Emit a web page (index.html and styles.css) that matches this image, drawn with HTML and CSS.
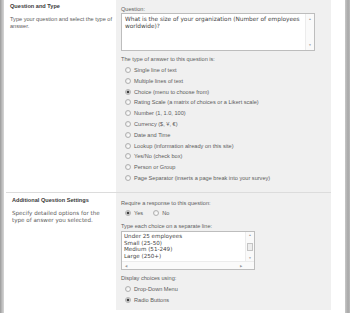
FILE: index.html
```html
<!DOCTYPE html>
<html>
<head>
    <title>Question and Type</title>
    <link rel="stylesheet" href="styles.css">
</head>
<body>
    <div class="frame">
        <div class="edge-left"></div>
        <div class="form">
            <div class="section first">
                <div class="desc">
                    <div class="title">Question and Type</div>
                    <div class="text">Type your question and select the type of answer.</div>
                </div>
                <div class="controls">
                    <div class="label">Question:</div>
                    <div class="textbox">
                        <div class="textbox-text">What is the size of your organization (Number of employees worldwide)?</div>
                        <div class="vscroll">
                            <span class="arrow">&#9650;</span>
                            <span class="arrow">&#9660;</span>
                        </div>
                    </div>
                    <div class="label gap">The type of answer to this question is:</div>
                    <div class="options">
                        <div class="option"><span class="radio"></span>Single line of text</div>
                        <div class="option"><span class="radio"></span>Multiple lines of text</div>
                        <div class="option"><span class="radio on"></span>Choice (menu to choose from)</div>
                        <div class="option"><span class="radio"></span>Rating Scale (a matrix of choices or a Likert scale)</div>
                        <div class="option"><span class="radio"></span>Number (1, 1.0, 100)</div>
                        <div class="option"><span class="radio"></span>Currency ($, &yen;, &euro;)</div>
                        <div class="option"><span class="radio"></span>Date and Time</div>
                        <div class="option"><span class="radio"></span>Lookup (information already on this site)</div>
                        <div class="option"><span class="radio"></span>Yes/No (check box)</div>
                        <div class="option"><span class="radio"></span>Person or Group</div>
                        <div class="option"><span class="radio"></span>Page Separator (inserts a page break into your survey)</div>
                    </div>
                </div>
            </div>
            <div class="section second">
                <div class="desc">
                    <div class="title">Additional Question Settings</div>
                    <div class="text">Specify detailed options for the type of answer you selected.</div>
                </div>
                <div class="controls">
                    <div class="label">Require a response to this question:</div>
                    <div class="inline-options">
                        <div class="option"><span class="radio on"></span>Yes</div>
                        <div class="option"><span class="radio"></span>No</div>
                    </div>
                    <div class="label gap">Type each choice on a separate line:</div>
                    <div class="listbox">
                        <div class="listbox-main">
                            <div class="listbox-text">
                                <div>Under 25 employees</div>
                                <div>Small (25-50)</div>
                                <div>Medium (51-249)</div>
                                <div>Large (250+)</div>
                            </div>
                            <div class="vscroll small">
                                <span class="arrow">&#9650;</span>
                                <span class="thumb"></span>
                                <span class="arrow">&#9660;</span>
                            </div>
                        </div>
                        <div class="hscroll">
                            <span class="arrow">&#9664;</span>
                            <span class="arrow">&#9654;</span>
                        </div>
                    </div>
                    <div class="label gap">Display choices using:</div>
                    <div class="option"><span class="radio"></span>Drop-Down Menu</div>
                    <div class="option"><span class="radio on"></span>Radio Buttons</div>
                </div>
            </div>
        </div>
        <div class="spacer"></div>
        <div class="edge-right"></div>
    </div>
</body>
</html>
```

FILE: styles.css
```css
body {
    margin: 0;
    background-color: white;
    font-family: "Liberation Sans", Arial, sans-serif;
    font-size: 5.6px;
    color: #5c5c5c;
}
.frame {
    display: flex;
    width: 350px;
    height: 313px;
    overflow: hidden;
}
.edge-left {
    width: 4px;
    background: linear-gradient(to right, #999, #bdbdbd 50%, #d6d6d6);
}
.edge-right {
    width: 5px;
    background: linear-gradient(to right, #c8c8c8, #a8a8a8 60%, #bbb);
}
.spacer {
    width: 14px;
}
.form {
    width: 327px;
    display: flex;
    flex-direction: column;
}
.section {
    display: flex;
}
.section.first {
    height: 192px;
}
.section.second {
    height: 117px;
    border-top: 1px solid #dcdcdc;
    margin-left: 2px;
}
.desc {
    width: 106px;
    padding: 2px 0 0 6px;
}
.second .desc {
    width: 104px;
    padding-top: 3px;
}
.title {
    font-weight: bold;
    color: #3a3a3a;
    line-height: 8px;
}
.text {
    margin-top: 6px;
    line-height: 7px;
    padding-right: 2px;
}
.second .text {
    font-family: "DejaVu Sans", Verdana, sans-serif;
    font-size: 5.6px;
    line-height: 7px;
    margin-top: 6px;
    padding-right: 4px;
}
.controls {
    flex: 1;
    background-color: #f0f0f0;
    padding: 5px 0 0 5px;
}
.second .controls {
    padding-top: 6px;
}
.label {
    line-height: 8px;
    color: #606060;
}
.label.gap {
    margin-top: 4px;
}
.textbox {
    display: flex;
    width: 192px;
    height: 36px;
    border: 1px solid #bdbdbd;
    background-color: white;
}
.textbox-text {
    flex: 1;
    padding: 2px 0 0 3px;
    font-family: "DejaVu Sans", Verdana, sans-serif;
    font-size: 5.8px;
    line-height: 7px;
    color: #444;
}
.vscroll {
    width: 8px;
    display: flex;
    flex-direction: column;
    justify-content: space-between;
    align-items: center;
    background-color: #fafafa;
    border-left: 1px solid #ececec;
    padding: 3px 0;
}
.arrow {
    font-size: 3px;
    line-height: 4px;
    color: #999;
}
.thumb {
    width: 4px;
    height: 6px;
    border: 1px solid #c4c4c4;
    background-color: #eee;
}
.options {
    margin-top: 1.6px;
}
.option {
    display: flex;
    align-items: center;
    height: 10.8px;
    padding-left: 4px;
}
.inline-options {
    display: flex;
    margin-top: 1px;
}
.inline-options .option {
    height: 10px;
    margin-right: 6px;
}
.radio {
    width: 4px;
    height: 4px;
    margin-right: 3px;
    border: 1px solid #b2b2b2;
    border-radius: 50%;
    background: radial-gradient(circle at 60% 60%, #fff, #dcdcdc);
    box-sizing: content-box;
}
.radio.on {
    background: radial-gradient(circle, #3a3a3a 0, #444 1.2px, #e6e6e6 1.7px, #fff);
}
.listbox {
    width: 132px;
    height: 37px;
    margin-top: 1px;
    border: 1px solid #bdbdbd;
    background-color: white;
    display: flex;
    flex-direction: column;
}
.listbox-main {
    flex: 1;
    display: flex;
}
.listbox-text {
    flex: 1;
    padding: 1px 0 0 2px;
    font-family: "DejaVu Sans", Verdana, sans-serif;
    font-size: 5.6px;
    line-height: 6.5px;
    color: #444;
    white-space: nowrap;
    overflow: hidden;
}
.vscroll.small {
    padding: 1px 0;
}
.hscroll {
    height: 7px;
    display: flex;
    justify-content: space-between;
    align-items: center;
    padding: 0 12px 0 3px;
    border-top: 1px solid #ececec;
    background-color: #fafafa;
}
.second .label.gap + .option {
    margin-top: 2px;
}
```
